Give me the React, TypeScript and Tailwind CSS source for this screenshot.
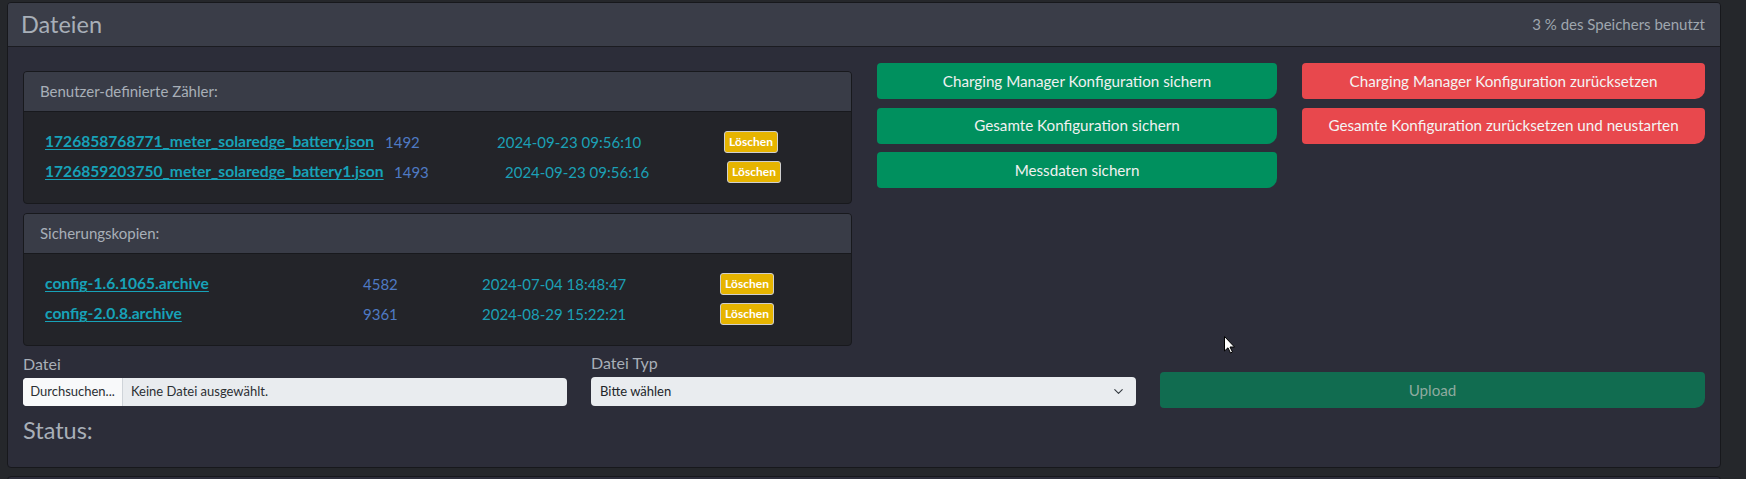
import { ChevronDown } from "lucide-react";

type FileRow = {
  name: string;
  size: string;
  date: string;
  // column widths for this row (link cell, size cell, date cell)
  w: [number, number, number];
};

const meters: FileRow[] = [
  { name: "1726858768771_meter_solaredge_battery.json", size: "1492", date: "2024-09-23 09:56:10", w: [340, 112, 227] },
  { name: "1726859203750_meter_solaredge_battery1.json", size: "1493", date: "2024-09-23 09:56:16", w: [349, 111, 222] },
];

const backups: FileRow[] = [
  { name: "config-1.6.1065.archive", size: "4582", date: "2024-07-04 18:48:47", w: [318, 119, 238] },
  { name: "config-2.0.8.archive", size: "9361", date: "2024-08-29 15:22:21", w: [318, 119, 238] },
];

const font = { fontFamily: "Lato, 'Liberation Sans', sans-serif" };

function Row({ row }: { row: FileRow }) {
  return (
    <div className="flex h-[30px] items-center text-[15px]">
      <div style={{ width: row.w[0] }}>
        <a href="#" className="text-[15.6px] font-bold text-[#17a2b8] underline underline-offset-2">
          {row.name}
        </a>
      </div>
      <div style={{ width: row.w[1] }} className="text-[#4f7ac4]">
        {row.size}
      </div>
      <div style={{ width: row.w[2] }} className="text-[#1ba0b6]">
        {row.date}
      </div>
      <button className="flex h-[22px] w-[54px] items-center justify-center rounded-[3px] border border-[#cfcfcf] bg-[#e6b400] text-[12px] font-bold text-white">
        Löschen
      </button>
    </div>
  );
}

function FileCard({ title, rows }: { title: string; rows: FileRow[] }) {
  return (
    <div className="overflow-hidden rounded-[4px] border border-[#18191d] bg-[#232429]">
      <div className="flex h-[40px] items-center border-b border-[#18191d] bg-[#393c47] px-[16px] text-[15px] text-[#a8afb8]">
        {title}
      </div>
      <div className="px-[21px] pt-[15px] pb-[16px]">
        {rows.map((r) => (
          <Row key={r.name} row={r} />
        ))}
      </div>
    </div>
  );
}

function GreenButton({ children }: { children: string }) {
  return (
    <button className="h-[36px] rounded-[4px_4px_10px_4px] bg-[#00905e] text-[15.2px] text-[#f1f1f1]">
      {children}
    </button>
  );
}

function RedButton({ children }: { children: string }) {
  return (
    <button className="h-[36px] rounded-[4px_4px_10px_4px] bg-[#e8484d] text-[15.2px] text-[#f4f4f4]">
      {children}
    </button>
  );
}

export default function App() {
  return (
    <div className="relative h-[479px] w-[1746px] overflow-hidden bg-[#25272b]" style={font}>
      <div className="pl-[7px] pt-[2px]">
        {/* Dateien card */}
        <div className="w-[1714px] overflow-hidden rounded-[4px] border border-[#17181c] bg-[#2c2d39]">
          <div className="flex h-[44px] items-center justify-between border-b border-[#1b1c21] bg-[#3a3d48] pl-[13px] pr-[15px]">
            <h1 className="text-[23.5px] text-[#a8afb8]">Dateien</h1>
            <span className="text-[15px] text-[#9fa6ae]">3 % des Speichers benutzt</span>
          </div>

          <div className="px-[15px] pt-[16px] pb-[23px]">
            <div className="grid grid-cols-[829px_400px_403px] gap-x-[25px]">
              <div className="mt-[8px] flex flex-col gap-[9px]">
                <FileCard title="Benutzer-definierte Zähler:" rows={meters} />
                <FileCard title="Sicherungskopien:" rows={backups} />
              </div>
              <div className="flex flex-col gap-[8.5px]">
                <GreenButton>Charging Manager Konfiguration sichern</GreenButton>
                <GreenButton>Gesamte Konfiguration sichern</GreenButton>
                <GreenButton>Messdaten sichern</GreenButton>
              </div>
              <div className="flex flex-col gap-[8.5px]">
                <RedButton>Charging Manager Konfiguration zurücksetzen</RedButton>
                <RedButton>Gesamte Konfiguration zurücksetzen und neustarten</RedButton>
              </div>
            </div>

            {/* Upload form */}
            <div className="mt-[5px] grid grid-cols-[544px_545px_545px] items-end gap-x-[24px]">
              <div>
                <label className="mb-[2px] block text-[16px] leading-[24px] text-[#a8afb8]">Datei</label>
                <div className="flex h-[28px] overflow-hidden rounded-[4px] bg-[#e9ecef] text-[13px] text-[#2b2f33]">
                  <span className="flex w-[100px] items-center justify-center border-r border-[#cfd4d9] bg-[#f8f9fa]">
                    Durchsuchen...
                  </span>
                  <span className="flex items-center pl-[8px]">Keine Datei ausgewählt.</span>
                </div>
              </div>
              <div>
                <label className="mb-[2px] block text-[16px] leading-[24px] text-[#a8afb8]">Datei Typ</label>
                <div className="flex h-[29px] items-center justify-between rounded-[4px] bg-[#e9ecef] pl-[9px] pr-[10px] text-[13px] text-[#212529]">
                  <span>Bitte wählen</span>
                  <ChevronDown size={15} strokeWidth={1.75} className="text-[#343a40]" />
                </div>
              </div>
              <button className="mb-[-2px] h-[36px] rounded-[4px_4px_10px_4px] bg-[#116c50] text-[15.2px] text-[#8eaa9f]">
                Upload
              </button>
            </div>

            <h2 className="mt-[10px] text-[23.5px] leading-[28px] text-[#a8afb8]">Status:</h2>
          </div>
        </div>

        {/* next card peeking below */}
        <div className="mt-[8px] h-[20px] w-[1714px] rounded-t-[4px] border border-[#17181c] bg-[#2c2d39]" />
      </div>

      {/* mouse pointer */}
      <svg className="absolute left-[1224px] top-[336px]" width="11" height="18" viewBox="0 0 11 18">
        <path d="M0.5 0.5 L0.5 15 L4 11.8 L6.5 17 L8.5 16 L6 11 L10.5 11 Z" fill="#fff" stroke="#000" strokeWidth="1" />
      </svg>
    </div>
  );
}
